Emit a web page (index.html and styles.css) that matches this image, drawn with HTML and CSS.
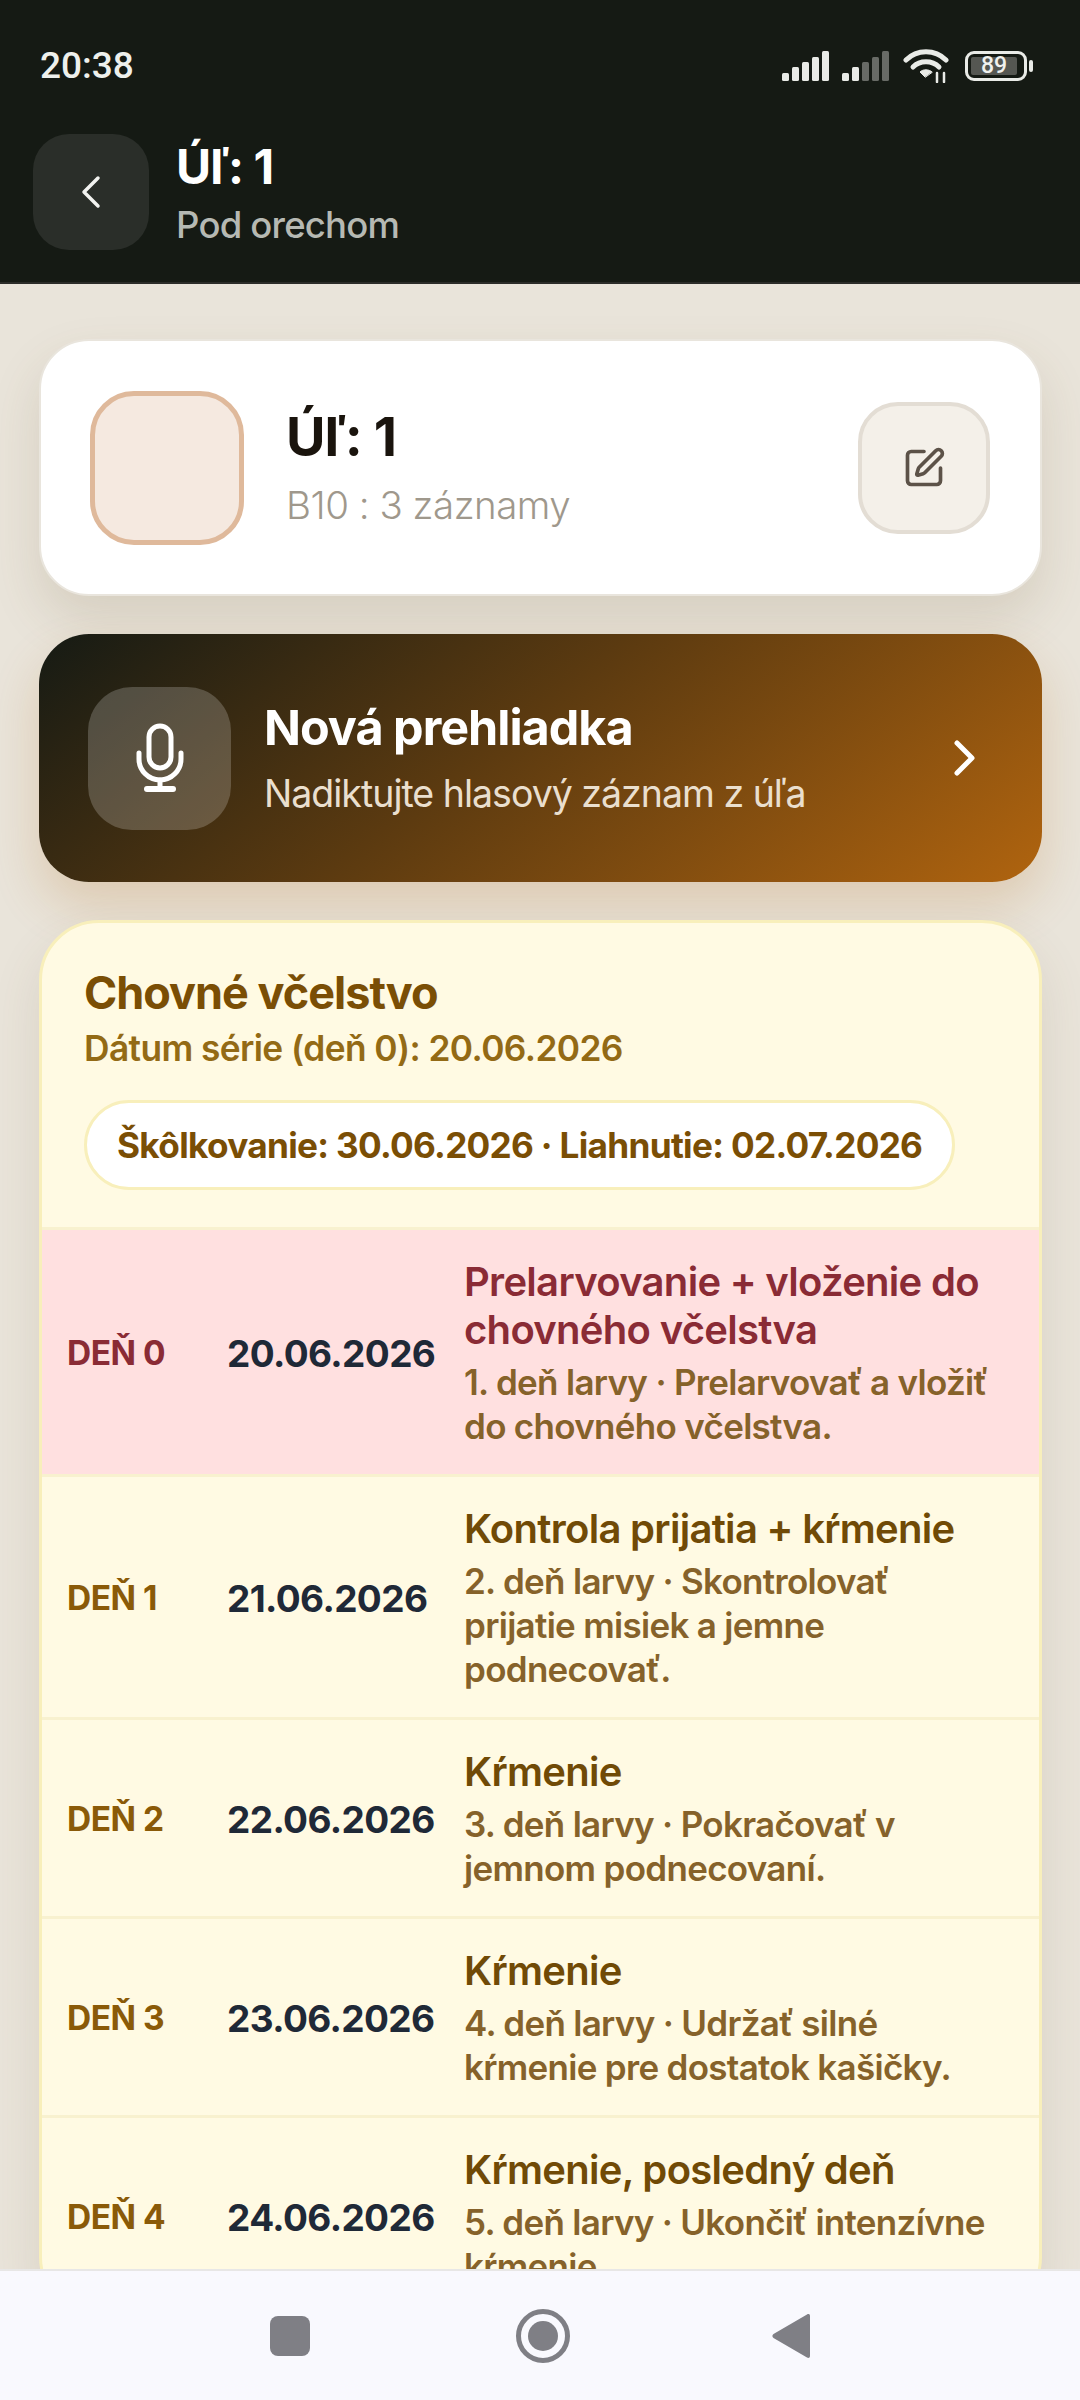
FILE: index.html
```html
<!DOCTYPE html>
<html lang="sk">
<head>
    <meta charset="UTF-8">
    <meta name="viewport" content="width=device-width, initial-scale=1.0">
    <title>Úľ: 1</title>
    <link rel="stylesheet" href="styles.css">
</head>
<body>
<div class="screen">
    <header class="topbar">
        <div class="status-bar">
            <span class="time">20:38</span>
            <div class="status-icons">
                <svg class="signal" viewBox="0 0 48 30" fill="#e9ebe7">
                    <rect x="0" y="22" width="7" height="8" rx="1.5"/>
                    <rect x="10" y="16" width="7" height="14" rx="1.5"/>
                    <rect x="20" y="11" width="7" height="19" rx="1.5"/>
                    <rect x="30" y="6" width="7" height="24" rx="1.5"/>
                    <rect x="40" y="0" width="7" height="30" rx="1.5"/>
                </svg>
                <svg class="signal" viewBox="0 0 48 30" fill="#e9ebe7">
                    <rect x="0" y="22" width="7" height="8" rx="1.5"/>
                    <rect x="10" y="16" width="7" height="14" rx="1.5"/>
                    <rect x="20" y="11" width="7" height="19" rx="1.5" fill="#686b66"/>
                    <rect x="30" y="6" width="7" height="24" rx="1.5" fill="#686b66"/>
                    <rect x="40" y="0" width="7" height="30" rx="1.5" fill="#686b66"/>
                </svg>
                <svg class="wifi" viewBox="0 0 46 34" fill="none" stroke="#e9ebe7" stroke-width="5" stroke-linecap="round">
                    <path d="M3 11C14 0 32 0 43 11"/>
                    <path d="M10 18C17 11 29 11 36 18"/>
                    <path d="M22 28l-5-5c3-3 9-3 12 0z" fill="#e9ebe7" stroke-width="1"/>
                    <path d="M34 24v9M41 24v9" stroke-width="2.5"/>
                </svg>
                <div class="battery">
                    <span class="battery-level">89</span>
                </div>
                <span class="battery-nub"></span>
            </div>
        </div>
        <div class="title-row">
            <button class="back-btn">
                <svg width="20" height="34" viewBox="0 0 20 34" fill="none" stroke="#f2f3f0" stroke-width="3.5" stroke-linecap="round" stroke-linejoin="round">
                    <path d="M17 3L3 17l14 14"/>
                </svg>
            </button>
            <div>
                <h1 class="page-title">Úľ: 1</h1>
                <p class="page-sub">Pod orechom</p>
            </div>
        </div>
    </header>

    <main class="content">
        <section class="hive-card">
            <div class="hive-avatar"></div>
            <div class="hive-text">
                <h2 class="hive-name">Úľ: 1</h2>
                <p class="hive-meta">B10 : 3 záznamy</p>
            </div>
            <button class="edit-btn">
                <svg width="44" height="44" viewBox="0 0 24 24" fill="none" stroke="#5c5248" stroke-width="2" stroke-linecap="round" stroke-linejoin="round">
                    <path d="M12 3H5a2 2 0 0 0-2 2v14a2 2 0 0 0 2 2h14a2 2 0 0 0 2-2v-7"/>
                    <path d="M18.4 2.6a1 1 0 0 1 3 3l-9 9a2 2 0 0 1-.85.5l-2.87.84a.5.5 0 0 1-.62-.62l.84-2.87a2 2 0 0 1 .5-.85z"/>
                </svg>
            </button>
        </section>

        <section class="voice-card">
            <div class="voice-icon">
                <svg width="48" height="70" viewBox="0 0 48 70" fill="none" stroke="#fff" stroke-width="5" stroke-linecap="round">
                    <rect x="13" y="3" width="22" height="42" rx="11"/>
                    <path d="M3 30v6a21 21 0 0 0 42 0v-6"/>
                    <path d="M24 57v9"/>
                    <path d="M11 66h26" stroke-width="6"/>
                </svg>
            </div>
            <div class="voice-text">
                <h2 class="voice-title">Nová prehliadka</h2>
                <p class="voice-sub">Nadiktujte hlasový záznam z úľa</p>
            </div>
            <svg class="voice-arrow" width="24" height="36" viewBox="0 0 24 36" fill="none" stroke="#fff" stroke-width="5" stroke-linecap="round" stroke-linejoin="round">
                <path d="M4 3l15 15L4 33"/>
            </svg>
        </section>

        <section class="queen-card">
            <div class="queen-head">
                <h2 class="queen-title">Chovné včelstvo</h2>
                <p class="queen-date">Dátum série (deň 0): 20.06.2026</p>
                <div class="queen-pill">Škôlkovanie: 30.06.2026 · Liahnutie: 02.07.2026</div>
            </div>

            <div class="day-row day-today">
                <span class="day-label">DEŇ 0</span>
                <span class="day-date">20.06.2026</span>
                <div class="day-info">
                    <h3 class="day-title">Prelarvovanie + vloženie do<br>chovného včelstva</h3>
                    <p class="day-desc">1. deň larvy · Prelarvovať a vložiť<br>do chovného včelstva.</p>
                </div>
            </div>
            <div class="day-row">
                <span class="day-label">DEŇ 1</span>
                <span class="day-date">21.06.2026</span>
                <div class="day-info">
                    <h3 class="day-title">Kontrola prijatia + kŕmenie</h3>
                    <p class="day-desc">2. deň larvy · Skontrolovať<br>prijatie misiek a jemne<br>podnecovať.</p>
                </div>
            </div>
            <div class="day-row">
                <span class="day-label">DEŇ 2</span>
                <span class="day-date">22.06.2026</span>
                <div class="day-info">
                    <h3 class="day-title">Kŕmenie</h3>
                    <p class="day-desc">3. deň larvy · Pokračovať v<br>jemnom podnecovaní.</p>
                </div>
            </div>
            <div class="day-row">
                <span class="day-label">DEŇ 3</span>
                <span class="day-date">23.06.2026</span>
                <div class="day-info">
                    <h3 class="day-title">Kŕmenie</h3>
                    <p class="day-desc">4. deň larvy · Udržať silné<br>kŕmenie pre dostatok kašičky.</p>
                </div>
            </div>
            <div class="day-row">
                <span class="day-label">DEŇ 4</span>
                <span class="day-date">24.06.2026</span>
                <div class="day-info">
                    <h3 class="day-title">Kŕmenie, posledný deň</h3>
                    <p class="day-desc">5. deň larvy · Ukončiť intenzívne<br>kŕmenie.</p>
                </div>
            </div>
        </section>
    </main>

    <nav class="nav-bar">
        <span class="nav-square"></span>
        <span class="nav-circle"><span class="nav-dot"></span></span>
        <svg class="nav-back" width="38" height="46" viewBox="0 0 38 46" fill="#7f7f85">
            <path d="M35 1.500c1.300-1 3-.5 3 1.500v40c0 2-1.700 2.500-3 1.500L1.500 25c-1.500-1-1.500-3 0-4z"/>
        </svg>
    </nav>
</div>
</body>
</html>
```

FILE: styles.css
```css
* {
    box-sizing: border-box;
}

body {
    margin: 0;
    font-family: Inter, "Noto Sans", sans-serif;
    background-color: #e9e4da;
}

h1, h2, h3, p {
    margin: 0;
}

button {
    padding: 0;
    display: flex;
    align-items: center;
    justify-content: center;
}

.screen {
    width: 1080px;
    height: 2400px;
    display: flex;
    flex-direction: column;
    overflow: hidden;
}

/* top dark area */
.topbar {
    height: 284px;
    flex: none;
    background-color: #151a14;
    border-bottom: 2px solid #2b2c29;
    color: white;
}

.status-bar {
    height: 134px;
    padding: 46px 47px 0 40px;
    display: flex;
    justify-content: space-between;
    align-items: flex-start;
}

.time {
    font-family: Roboto, sans-serif;
    font-size: 37px;
    line-height: 40px;
    font-weight: 500;
    color: #eef0ec;
}

.status-icons {
    display: flex;
    align-items: center;
    padding-top: 3px;
}

.signal {
    width: 48px;
    height: 30px;
    margin-right: 12px;
}

.wifi {
    width: 46px;
    height: 34px;
    margin: 0 16px 0 1px;
}

.battery {
    width: 62px;
    height: 30px;
    border: 3px solid #e9ebe7;
    border-radius: 9px;
    padding: 3px;
    display: flex;
    justify-content: flex-start;
}

.battery-level {
    width: 46px;
    background-color: #555752;
    border-radius: 2px;
    font-family: Roboto, sans-serif;
    font-size: 23px;
    line-height: 18px;
    font-weight: 500;
    text-align: center;
    color: #f0f1ee;
}

.battery-nub {
    width: 4px;
    height: 12px;
    margin-left: 2px;
    background-color: #e9ebe7;
    border-radius: 2px;
}

.title-row {
    display: flex;
    align-items: center;
    gap: 27px;
    padding-left: 33px;
}

.back-btn {
    width: 116px;
    height: 116px;
    background-color: #2a2e29;
    border: none;
    border-radius: 36px;
}

.page-title {
    font-size: 48px;
    line-height: 58px;
    margin-top: 2px;
    font-weight: 700;
    letter-spacing: -1px;
}

.page-sub {
    font-size: 36.5px;
    line-height: 46px;
    margin-top: 6px;
    font-weight: 500;
    letter-spacing: -0.8px;
    color: #b6b9b3;
}

/* scrolling content */
.content {
    flex: 1;
    min-height: 0;
    overflow: hidden;
    padding: 55px 38px 0 39px;
    display: flex;
    flex-direction: column;
}

.hive-card {
    flex: none;
    height: 257px;
    background-color: white;
    border: 2px solid #e9e5dd;
    border-radius: 50px;
    padding: 0 50px 0 49px;
    display: flex;
    align-items: center;
    box-shadow: 0 24px 50px rgba(110, 85, 50, 0.15);
}

.hive-avatar {
    width: 154px;
    height: 154px;
    background-color: #f5e9e0;
    border: 5px solid #dfb99b;
    border-radius: 44px;
}

.hive-text {
    flex: 1;
    margin-left: 42px;
}

.hive-name {
    font-size: 54px;
    line-height: 62px;
    font-weight: 700;
    letter-spacing: -1px;
    color: #1a140d;
}

.hive-meta {
    font-size: 38.5px;
    line-height: 50px;
    margin-top: 12px;
    font-weight: 300;
    letter-spacing: -0.5px;
    color: #9f988c;
}

.edit-btn {
    width: 132px;
    height: 132px;
    background-color: #f4f0e9;
    border: 4px solid #e3ddd4;
    border-radius: 40px;
}

.voice-card {
    flex: none;
    height: 248px;
    margin-top: 38px;
    padding: 0 65px 0 49px;
    border-radius: 50px;
    display: flex;
    align-items: center;
    background: linear-gradient(142deg, #151a14 0%, #5b3a10 45%, #b0640f 100%);
    box-shadow: 0 24px 50px rgba(176, 100, 15, 0.2);
}

.voice-icon {
    width: 143px;
    height: 143px;
    background-color: rgba(255, 255, 255, 0.2);
    border-radius: 44px;
    display: flex;
    align-items: center;
    justify-content: center;
}

.voice-text {
    flex: 1;
    margin-left: 33px;
}

.voice-title {
    font-size: 48.5px;
    line-height: 58px;
    font-weight: 700;
    letter-spacing: -1px;
    color: white;
}

.voice-sub {
    font-size: 37.5px;
    line-height: 48px;
    margin-top: 13px;
    font-weight: 400;
    letter-spacing: -1px;
    color: #eadfce;
}

.queen-card {
    flex: none;
    margin-top: 38px;
    background-color: #fffae3;
    border: 3px solid #f8efbb;
    border-radius: 60px;
    overflow: hidden;
    box-shadow: 0 24px 50px rgba(110, 85, 50, 0.12);
}

.queen-head {
    padding: 42px 42px 37px;
}

.queen-title {
    font-size: 45px;
    line-height: 56px;
    font-weight: 700;
    letter-spacing: -1px;
    color: #7a4e05;
}

.queen-date {
    font-size: 35.3px;
    line-height: 50px;
    margin-top: 3px;
    font-weight: 600;
    letter-spacing: -0.6px;
    color: #936a15;
}

.queen-pill {
    display: inline-block;
    margin-top: 26px;
    height: 90px;
    padding: 0 30px;
    background-color: white;
    border: 3px solid #f8efbb;
    border-radius: 45px;
    font-size: 35.2px;
    line-height: 84px;
    font-weight: 700;
    letter-spacing: -0.7px;
    white-space: nowrap;
    color: #7a4e05;
}

.day-row {
    display: grid;
    grid-template-columns: 160px 237px 1fr;
    align-items: center;
    padding: 28px 10px 26px 25px;
    border-top: 3px solid #f8f1cf;
}

.day-label {
    font-size: 33.5px;
    font-weight: 700;
    letter-spacing: -0.5px;
    color: #8a5a08;
}

.day-date {
    font-size: 37px;
    font-weight: 700;
    letter-spacing: -0.6px;
    color: #1f2937;
}

.day-title {
    font-size: 40px;
    line-height: 48px;
    font-weight: 600;
    letter-spacing: -0.7px;
    color: #704a06;
}

.day-desc {
    font-size: 35px;
    line-height: 44px;
    margin-top: 6px;
    font-weight: 600;
    letter-spacing: -0.7px;
    color: #86622a;
}

.day-today {
    background-color: #ffe0e0;
}

.day-today .day-label,
.day-today .day-title {
    color: #8a2b35;
}

/* android buttons */
.nav-bar {
    flex: none;
    height: 131px;
    background-color: #f9f9fe;
    border-top: 2px solid #e8e7e6;
    display: flex;
    align-items: center;
    justify-content: center;
    gap: 206px;
}

.nav-square {
    width: 40px;
    height: 40px;
    background-color: #7f7f85;
    border-radius: 8px;
}

.nav-circle {
    width: 54px;
    height: 54px;
    border: 5px solid #7f7f85;
    border-radius: 50%;
    display: flex;
    align-items: center;
    justify-content: center;
}

.nav-dot {
    width: 30px;
    height: 30px;
    background-color: #7f7f85;
    border-radius: 50%;
}

.nav-back {
    margin-left: -4px;
}
```
